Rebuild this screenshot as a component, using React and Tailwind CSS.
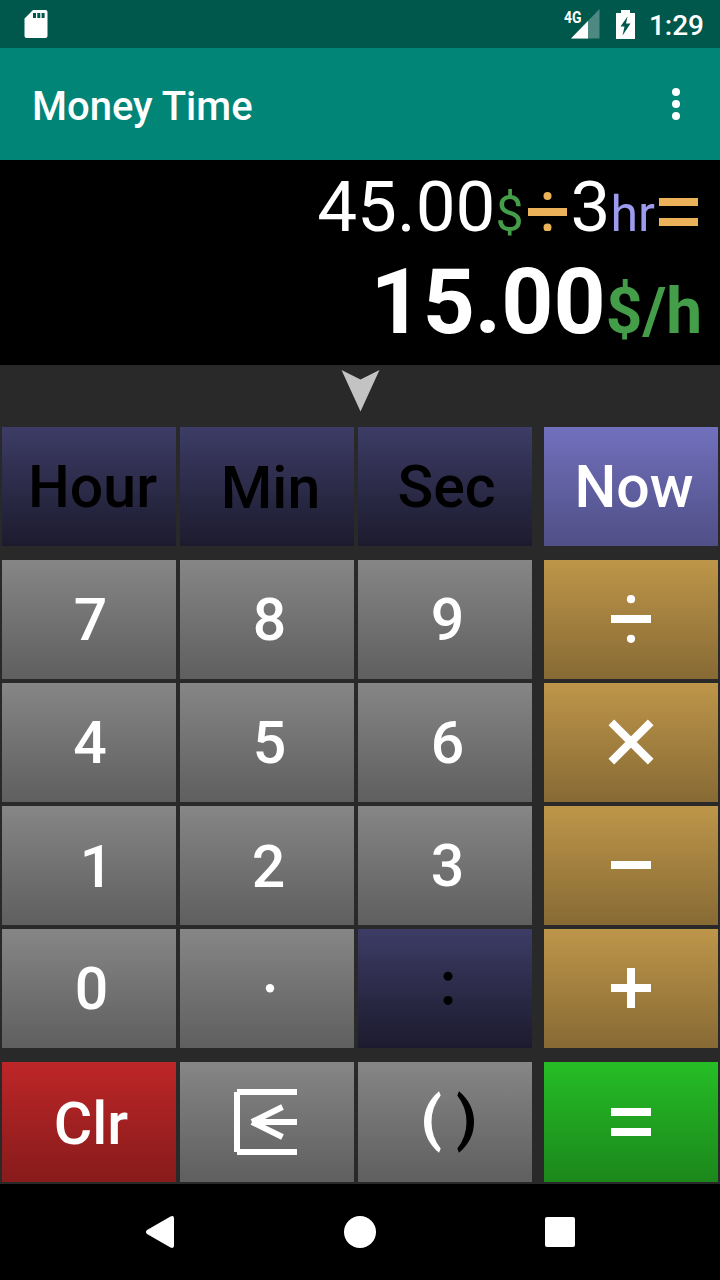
import React from "react"

const tones = {
  gray: "bg-gradient-to-b from-[#868686] to-[#5f5f5f] text-white",
  navy: "bg-gradient-to-b from-[#3d3c66] to-[#1c1b2e] text-black",
  violet: "bg-gradient-to-b from-[#7170bd] to-[#504f86] text-white",
  gold: "bg-gradient-to-b from-[#be964a] to-[#876a34] text-white",
  red: "bg-gradient-to-b from-[#be2628] to-[#871b1b] text-white",
  green: "bg-gradient-to-b from-[#26be26] to-[#1b871b] text-white",
}

// odd height keeps the bars on whole pixels inside the 119px keys
const Sign = ({ children }) => (
  <svg className="w-[60px] h-[61px]" viewBox="-30 -30.5 60 61" fill="currentColor">
    {children}
  </svg>
)

const Divide = () => (
  <Sign>
    <rect x="-20" y="-4.5" width="40" height="8" />
    <circle cy="-20.3" r="4.1" />
    <circle cy="19.3" r="4.1" />
  </Sign>
)

const Times = () => (
  <Sign>
    <path d="M-19.7-20.2 19.7 19.2M19.7-20.2-19.7 19.2" stroke="currentColor" strokeWidth="8" />
  </Sign>
)

const Minus = () => (
  <Sign>
    <rect x="-20" y="-4.5" width="40" height="8" />
  </Sign>
)

const Plus = () => (
  <Sign>
    <rect x="-20" y="-4.5" width="40" height="8" />
    <rect x="-4" y="-20.5" width="8" height="40" />
  </Sign>
)

const Equals = () => (
  <svg className="w-10 h-7" viewBox="0 0 40 28" fill="currentColor">
    <rect width="40" height="8" />
    <rect y="20" width="40" height="8" />
  </svg>
)

const Point = () => (
  <Sign>
    <circle cx="3" cy="-0.3" r="4.2" />
  </Sign>
)

const Colon = () => (
  <Sign>
    <circle cx="3" cy="-12.3" r="4.5" />
    <circle cx="3" cy="11.9" r="4.5" />
  </Sign>
)

const Backspace = () => (
  <svg className="w-[66px] h-[68px]" viewBox="0 0 66 68" fill="none" stroke="currentColor" strokeWidth="6">
    <path d="M3 4v60M3 4h60M3 64h60" />
    <path d="M18 34h45M48.5 19 18 34M48.5 49 18 34" />
  </svg>
)

const Parens = () => (
  <svg className="w-[56px] h-[68px]" viewBox="0 0 56 68">
    <path d="M17 3.2 18.7 7.5Q9.5 19 9.5 34T18.7 60.5L17 64.8Q2 52 2 34T17 3.2z" fill="#fff" />
    <path d="M37 3.2 35.3 7.5Q44.5 19 44.5 34T35.3 60.5L37 64.8Q52 52 52 34T37 3.2z" fill="#000" />
  </svg>
)

const rows = [
  [
    { id: "hour", tone: "navy", label: "Hour", shift: "pl-[7px]" },
    { id: "min", tone: "navy", label: "Min", shift: "pl-[7px] pt-[2px]" },
    { id: "sec", tone: "navy", label: "Sec", shift: "pl-[3px]" },
    { id: "now", tone: "violet", label: "Now", shift: "pl-[6px]" },
  ],
  [
    { id: "7", tone: "gray", label: "7", shift: "pl-[3px]" },
    { id: "8", tone: "gray", label: "8", shift: "pl-[5px]" },
    { id: "9", tone: "gray", label: "9", shift: "pl-[5px]" },
    { id: "divide", tone: "gold", label: <Divide /> },
  ],
  [
    { id: "4", tone: "gray", label: "4", shift: "pl-[2px]" },
    { id: "5", tone: "gray", label: "5", shift: "pl-[5px]" },
    { id: "6", tone: "gray", label: "6", shift: "pl-[5px]" },
    { id: "times", tone: "gold", label: <Times /> },
  ],
  [
    { id: "1", tone: "gray", label: "1", shift: "pl-[15px] pt-px" },
    { id: "2", tone: "gray", label: "2", shift: "pl-[3px] pt-px" },
    { id: "3", tone: "gray", label: "3", shift: "pl-[5px]" },
    { id: "minus", tone: "gold", label: <Minus /> },
  ],
  [
    { id: "0", tone: "gray", label: "0", shift: "pl-[5px]" },
    { id: "point", tone: "gray", label: <Point /> },
    { id: "colon", tone: "navy", label: <Colon /> },
    { id: "plus", tone: "gold", label: <Plus /> },
  ],
  [
    { id: "clear", tone: "red", label: "Clr", shift: "pl-[4px] pt-[2px]" },
    { id: "backspace", tone: "gray", label: <Backspace /> },
    { id: "parens", tone: "gray", label: <Parens />, shift: "pl-[9px]" },
    { id: "equals", tone: "green", label: <Equals /> },
  ],
]

const Key = ({ tone, label, shift = "" }) => (
  <button
    type="button"
    className={`flex items-center justify-center text-[59px] leading-none font-medium whitespace-nowrap ${tones[tone]} ${shift}`}
  >
    {label}
  </button>
)

const KeyRow = ({ keys, className = "h-[119px]" }) => (
  <div className={`flex justify-between ${className}`}>
    <div className="grid grid-cols-[174px_174px_174px] gap-x-1">
      {keys.slice(0, 3).map((k) => (
        <Key key={k.id} {...k} />
      ))}
    </div>
    <div className="grid w-[174px]">
      <Key {...keys[3]} />
    </div>
  </div>
)

const StatusBar = () => (
  <header className="h-12 bg-[#00574b] flex items-center justify-between pl-6 pr-4 text-white">
    <svg className="w-6 h-7" viewBox="0 0 24 28">
      <path
        fillRule="evenodd"
        fill="currentColor"
        d="M9 0h12.5Q23.5 0 23.5 2v24q0 2-2 2h-19q-2 0-2-2V8.5zM9 3v5h3V3zM13.300 3v5h3V3zM17.600 3v5h3V3z"
      />
    </svg>
    <div className="flex items-center">
      <svg className="w-[42px] h-[42px]" viewBox="-4 -6 42 42">
        <path d="M36.500 0v29.500H8z" fill="#4d8981" />
        <path d="M25 12V29.500H8z" fill="#fff" />
        <text x="1" y="13.500" fill="#fff" fontSize="16" fontWeight="700" textLength="17.500" lengthAdjust="spacingAndGlyphs">
          4G
        </text>
      </svg>
      <svg className="w-[19px] h-[29px] ml-[15px]" viewBox="0 0 19 29">
        <path
          fillRule="evenodd"
          fill="#fff"
          d="M5 0h9v3h5v26H0V3h5zM11.500 6.500 4.500 16.500h4L6.500 25.500 14.500 13.500h-4.500z"
        />
      </svg>
      <span className="ml-[14px] pt-[3px] text-[28px] leading-none font-medium">1:29</span>
    </div>
  </header>
)

const Toolbar = () => (
  <div className="h-28 bg-[#008577] flex items-center justify-between pl-8 pr-10 text-white">
    <h1 className="text-[40px] leading-none font-medium pt-[5px]">Money Time</h1>
    <svg className="w-2 h-8" viewBox="0 0 8 32" fill="currentColor">
      <circle cx="4" cy="4" r="4" />
      <circle cx="4" cy="16" r="4" />
      <circle cx="4" cy="28" r="4" />
    </svg>
  </div>
)

const Display = () => (
  <section className="h-[205px] bg-black text-white flex flex-col items-end pt-[5px] pr-[18px]">
    <div className="flex items-baseline text-[71px] leading-[84px] h-[84px]">
      <span>45.00</span>
      <span className="text-[50px] text-[#449d48]">$</span>
      <svg className="w-[39px] h-[39px] ml-[4px] mr-[4px]" viewBox="0 0 39 39" fill="#ebb25a">
        <rect y="16" width="39" height="8" />
        <circle cx="19.500" cy="4" r="4" />
        <circle cx="19.500" cy="35.500" r="4" />
      </svg>
      <span>3</span>
      <span className="text-[50px] text-[#9c9bee]">hr</span>
      <svg className="w-[39px] h-[39px] ml-[4px] mr-1" viewBox="0 0 39 39" fill="#ebb25a">
        <rect y="6" width="39" height="8" />
        <rect y="26" width="39" height="8" />
      </svg>
    </div>
    <div className="flex items-baseline text-[91px] leading-[100px] font-bold pt-[3px]">
      <span>15.00</span>
      <span className="text-[64px] text-[#449d48]">$/h</span>
    </div>
  </section>
)

const NavBar = () => (
  <nav className="h-24 bg-black flex items-center justify-between pl-[145px] pr-[145px] text-white">
    <svg className="w-[30px] h-8" viewBox="0 0 30 32" fill="currentColor">
      <path d="M2 14 25.500.500Q29-1 29 2.500v27Q29 33 25.500 31.500L2 18Q0 16 2 14z" />
    </svg>
    <div className="size-8 rounded-full bg-white" />
    <div className="size-[30px] rounded-[2px] bg-white" />
  </nav>
)

const App = () => {
  return (
    <main className="w-[720px] h-[1280px] overflow-hidden bg-[#292929] font-[Roboto,sans-serif] flex flex-col">
      <StatusBar />
      <Toolbar />
      <Display />
      <div className="h-[62px] flex justify-center pt-1">
        <svg className="w-10 h-11" viewBox="0 0 40 44">
          <path d="M1.500 1 20.500 10.500 39.500 1 20.500 42.500z" fill="#c3c3c3" />
        </svg>
      </div>
      <div className="h-[757px] px-[2px]">
        <KeyRow keys={rows[0]} />
        <div className="flex flex-col gap-1 py-[14px]">
          {rows.slice(1, 5).map((keys) => (
            <KeyRow key={keys[0].id} keys={keys} />
          ))}
        </div>
        <KeyRow keys={rows[5]} className="h-[120px]" />
      </div>
      <NavBar />
    </main>
  )
}

export default App
